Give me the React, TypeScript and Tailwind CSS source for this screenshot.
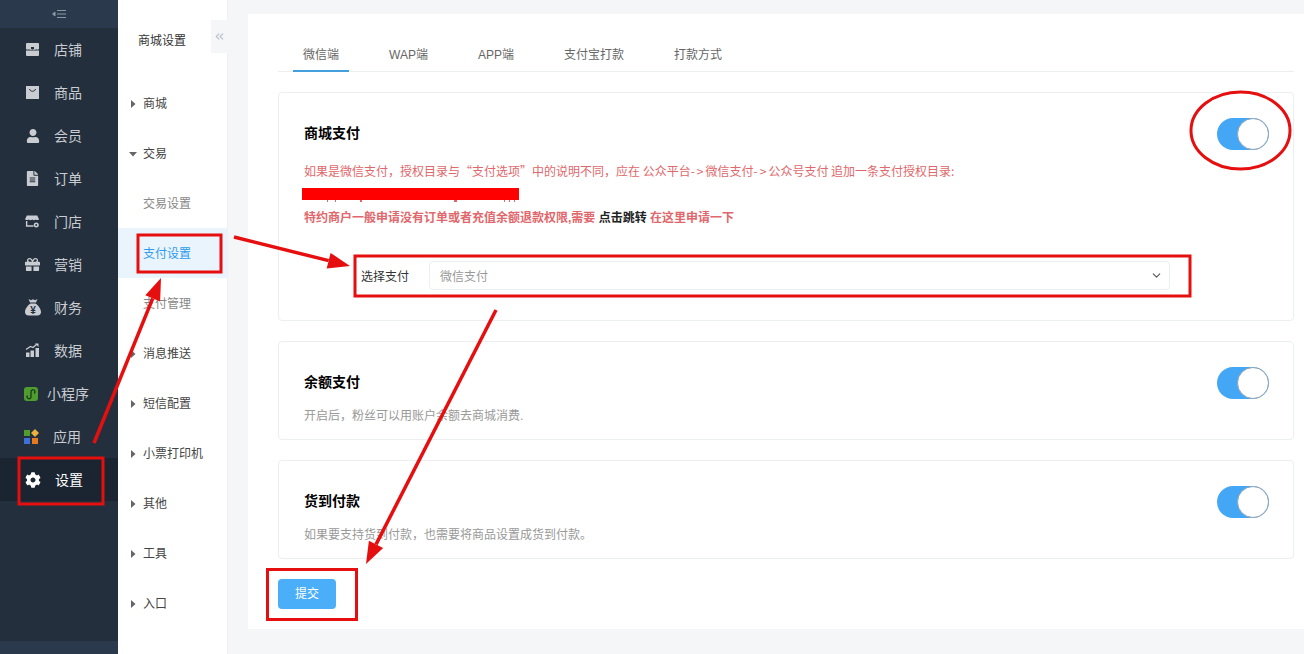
import { FaCog, FaFileAlt, FaGift, FaUser } from "react-icons/fa"
import { ChevronDown, ChevronsLeft } from "lucide-react"

const StoreIcon = () => (
  <svg viewBox="0 0 15 15" className="size-[15px]" fill="currentColor">
    <path d="M2 1h11a1 1 0 0 1 1 1v11a1 1 0 0 1-1 1H2a1 1 0 0 1-1-1V2a1 1 0 0 1 1-1z" />
    <path d="M1 7c1 .8 2 .8 3 .2 1 .8 2.400.8 3.500 0 1.100.8 2.500.8 3.500 0 1 .6 2 .6 3-.2v1.500H1z" fill="#232f3d" />
    <path d="M6 5h3v2H6z" fill="#232f3d" />
  </svg>
)

const BagIcon = () => (
  <svg viewBox="0 0 15 15" className="size-[15px]" fill="currentColor">
    <path d="M1 1h13v13H1z" />
    <path d="M4.500 4c.5 3 5.500 3 6 0" fill="none" stroke="#232f3d" strokeWidth="1" />
  </svg>
)

const ShopIcon = () => (
  <svg viewBox="0 0 16 15" className="size-[15px]" fill="currentColor">
    <path d="M2 1h11l2 4c-1 1.300-2.600 1.300-3.500.3-1 1-2.800 1-3.800 0-1 1-2.700 1-3.700 0C3.100 6.300 1.300 6.300 0 5z" />
    <path d="M1 7h1.500v4.500H9V13H1zM12 8.500a2.700 2.700 0 1 1 0 5.400 2.700 2.700 0 0 1 0-5.400zm0 1.700a1 1 0 1 0 0 2 1 1 0 0 0 0-2z" />
  </svg>
)

const MoneyIcon = () => (
  <svg viewBox="0 0 16 17" className="w-4 h-[17px] shrink-0" fill="currentColor">
    <path d="M3.500 0l2.500 1.200L8 .2l2 1L12.500 0 11 3.500H5zM5.500 4.500h5C13.500 6.500 16 10 16 13c0 3-2.500 3.500-5 3.500H5C2.500 16.500 0 16 0 13 0 10 2.500 6.500 5.500 4.500z" />
    <text x="8" y="14.500" textAnchor="middle" fontSize="10" fontWeight="700" fill="#232f3d" fontFamily="Liberation Sans">¥</text>
  </svg>
)

const ChartIcon = () => (
  <svg viewBox="0 0 15 15" className="size-[15px]" fill="currentColor">
    <path d="M1 9.500h3.500V14H1zM5.500 7.500H9V14H5.500zM10.500 5H14v9h-3.500z" />
    <path d="M1 6.500 5.500 3.500l2.500 1L12 1" fill="none" stroke="currentColor" strokeWidth="1.300" />
    <path d="M10 .5h3.500V4z" />
  </svg>
)

const MiniIcon = () => (
  <svg viewBox="0 0 14 14" className="size-[14px]">
    <rect width="14" height="14" rx="3" fill="#4f9d2f" />
    <path d="M3.500 8.500a2 2 0 1 0 3.500 1V5a2 2 0 1 1 3 1.500" fill="none" stroke="#17301a" strokeWidth="1.200" />
  </svg>
)

const AppsIcon = () => (
  <svg viewBox="0 0 15 15" className="size-[15px]">
    <rect x="0" y="1" width="6" height="6" fill="#4f9d2f" />
    <path d="M11 0l4 4-4 4-4-4z" fill="#e8b23c" />
    <rect x="0" y="9" width="6" height="6" fill="#3f6fd8" />
    <rect x="8" y="9" width="6" height="6" fill="#e57a1f" />
  </svg>
)

const mainNav = [
  { name: "店铺", icon: <StoreIcon /> },
  { name: "商品", icon: <BagIcon /> },
  { name: "会员", icon: <FaUser size={14} /> },
  { name: "订单", icon: <FaFileAlt size={15} /> },
  { name: "门店", icon: <ShopIcon /> },
  { name: "营销", icon: <FaGift size={15} /> },
  { name: "财务", icon: <MoneyIcon /> },
  { name: "数据", icon: <ChartIcon /> },
]

const subNav = ["消息推送", "短信配置", "小票打印机", "其他", "工具", "入口"]
const tabs = ["微信端", "WAP端", "APP端", "支付宝打款", "打款方式"]

function Toggle() {
  return (
    <div className="flex justify-end w-[52px] h-8 rounded-full bg-[#44a7f5]">
      <div className="size-8 rounded-full bg-white border border-[#8fa3b5]" />
    </div>
  )
}

function Caret({ open }: { open?: boolean }) {
  return (
    <svg viewBox="0 0 8 8" className="size-2 text-[#666]" fill="currentColor">
      {open ? <path d="M0 2h8L4 6.500z" /> : <path d="M2 0l4.500 4L2 8z" />}
    </svg>
  )
}

function Arrow({ x1, y1, x2, y2 }: { x1: number; y1: number; x2: number; y2: number }) {
  const angle = Math.atan2(y2 - y1, x2 - x1)
  const len = 22
  const half = 8
  const bx = x2 - len * Math.cos(angle)
  const by = y2 - len * Math.sin(angle)
  const px = -Math.sin(angle) * half
  const py = Math.cos(angle) * half
  return (
    <g>
      <line x1={x1} y1={y1} x2={bx} y2={by} stroke="#e60f0f" strokeWidth="3.500" />
      <polygon points={`${x2},${y2} ${bx + px},${by + py} ${bx - px},${by - py}`} fill="#e60f0f" />
    </g>
  )
}

function Annotations() {
  return (
    <svg className="absolute left-0 top-0 pointer-events-none" width="1304" height="654" fill="none">
      <rect x="19" y="458" width="84" height="46" stroke="#e60f0f" strokeWidth="3" />
      <rect x="138" y="235" width="83" height="37" stroke="#e60f0f" strokeWidth="3" />
      <rect x="355" y="256" width="835" height="40" stroke="#e60f0f" strokeWidth="3" />
      <rect x="267.500" y="569.500" width="89" height="50" stroke="#e60f0f" strokeWidth="3" />
      <ellipse cx="1240.500" cy="130.500" rx="49.500" ry="38.500" stroke="#e60f0f" strokeWidth="3" />
      <Arrow x1={94} y1={443} x2={161} y2={278} />
      <Arrow x1={234} y1={237} x2={350} y2={266} />
      <Arrow x1={496} y1={310} x2={366} y2={564} />
    </svg>
  )
}

export default function App() {
  return (
    <div className="relative flex w-[1304px] h-[654px] overflow-hidden bg-[#f4f6f8] font-['Liberation_Sans','Noto_Sans_CJK_SC',sans-serif] text-xs">
      {/* Main nav */}
      <aside className="flex flex-col w-[118px] shrink-0 bg-[#232f3d] text-[#c9ccd0] text-sm">
        <div className="flex items-center justify-center h-7 bg-[#2a3a4c] text-[#8b97a5]">
          <svg viewBox="0 0 14 8" className="w-3.5 h-2" stroke="currentColor" fill="none" strokeWidth="1">
            <path d="M5 .5h9M5 4h9M5 7.500h9" />
            <path d="M3 2 .5 4 3 6z" fill="currentColor" />
          </svg>
        </div>
        {mainNav.map((item) => (
          <div key={item.name} className="flex items-center gap-3.5 h-[43px] pl-[25px]">
            <span className="flex w-[15px] justify-center">{item.icon}</span>
            <span>{item.name}</span>
          </div>
        ))}
        <div className="flex items-center gap-[9px] h-[43px] pl-6">
          <MiniIcon />
          <span>小程序</span>
        </div>
        <div className="flex items-center gap-3.5 h-[43px] pl-6">
          <AppsIcon />
          <span>应用</span>
        </div>
        <div className="flex items-center gap-3.5 h-[43px] pl-[25px] bg-[#1b2431] text-white">
          <FaCog size={16} />
          <span>设置</span>
        </div>
        <div className="mt-auto h-[13px] bg-[#2a3a4c]" />
      </aside>

      {/* Sub nav */}
      <nav className="relative flex flex-col w-[110px] shrink-0 bg-white border-r border-[#eef0f3] text-[#444]">
        <div className="h-[78px] pt-[34px] pl-5 leading-[14px] text-[#333]">商城设置</div>
        <div className="absolute -right-px top-5 flex items-center justify-center w-[17px] h-[33px] bg-[#f4f6f8] text-[#b9c0c9]">
          <ChevronsLeft size={13} />
        </div>
        <div className="flex items-center h-[50px] pt-[2px] pl-[11px] gap-1.5">
          <Caret />
          <span>商城</span>
        </div>
        <div className="flex items-center h-[50px] pt-[2px] pl-[11px] gap-1.5">
          <Caret open />
          <span>交易</span>
        </div>
        <div className="flex items-center h-[50px] pt-[2px] pl-[25px] text-[#888]">交易设置</div>
        <div className="flex items-center h-[50px] pt-[2px] pl-[25px] bg-[#eaf4fd] text-[#2d9bf0]">支付设置</div>
        <div className="flex items-center h-[50px] pt-[2px] pl-[25px] text-[#888]">支付管理</div>
        {subNav.map((name) => (
          <div key={name} className="flex items-center h-[50px] pt-[2px] pl-[11px] gap-1.5">
            <Caret />
            <span>{name}</span>
          </div>
        ))}
      </nav>

      {/* Content */}
      <main className="flex-1 pt-3.5 pl-5">
        <div className="h-[615px] bg-white pl-[30px] pr-2.5">
          <div className="flex gap-[30px] h-[58px] pt-[22px] pl-[15px] border-b border-[#eceef1] text-[#666]">
            {tabs.map((tab, i) => (
              <div
                key={tab}
                className={`h-9 px-2.5 leading-[38px] ${i === 0 ? "border-b-2 border-[#44a0dc]" : ""}`}
              >
                {tab}
              </div>
            ))}
          </div>

          <section className="mt-5 h-[229px] rounded-sm border border-[#eceef1] relative pl-[25px] pt-[30px]">
            <h3 className="text-sm font-bold leading-[20px] text-black">商城支付</h3>
            <div className="absolute right-6 top-[25px]">
              <Toggle />
            </div>
            <p className="mt-[18px] leading-[20px] text-[#e0676b] font-['Noto_Sans_CJK_SC',sans-serif]">
              如果是微信支付，授权目录与“支付选项”中的说明不同，应在 公众平台
              <span className="tracking-[2px]">-&gt;</span>微信支付<span className="tracking-[2px]">-&gt;</span>
              公众号支付 追加一条支付授权目录:
            </p>
            <div className="relative mt-1 h-[20px]">
              {/* descenders of the hidden line, sticking out below the red bar */}
              <svg className="absolute -left-0.5 top-[3px]" width="217" height="15" fill="#e0676b">
                <path d="M25 12h1v2h-1zM33 12h1v2h-1zM58 12h2v2h-2zM152 12h3v2h-3zM202 12h1v2h-1zM207 12h1v2h-1zM212 12h1v2h-1z" />
              </svg>
              <div className="absolute -left-0.5 top-[3px] w-[217px] h-3 bg-[#ff0000]" />
            </div>
            <p className="mt-[3px] leading-[20px] font-semibold text-[#e0676b]">
              特约商户一般申请没有订单或者充值余额退款权限,需要 <span className="text-[#222]">点击跳转</span> 在这里申请一下
            </p>
            <div className="flex items-center mt-[33px] ml-[57px]">
              <label className="w-[68px] pt-[2px] text-[#333]">选择支付</label>
              <div className="flex items-center justify-between w-[741px] h-[29px] pl-2.5 pr-1.5 rounded-sm border border-[#eceef1] text-[#999]">
                <span className="pt-[2px]">微信支付</span>
                <ChevronDown size={13} className="text-[#555]" />
              </div>
            </div>
          </section>

          <section className="relative mt-5 h-[99px] rounded-sm border border-[#eceef1] pl-[25px] pt-[30px]">
            <h3 className="text-sm font-bold leading-[20px] text-black">余额支付</h3>
            <div className="absolute right-6 top-[25px]">
              <Toggle />
            </div>
            <p className="mt-[14px] leading-[20px] text-[#999]">开启后，粉丝可以用账户余额去商城消费.</p>
          </section>

          <section className="relative mt-5 h-[99px] rounded-sm border border-[#eceef1] pl-[25px] pt-[30px]">
            <h3 className="text-sm font-bold leading-[20px] text-black">货到付款</h3>
            <div className="absolute right-6 top-[25px]">
              <Toggle />
            </div>
            <p className="mt-[14px] leading-[20px] text-[#999]">如果要支持货到付款，也需要将商品设置成货到付款。</p>
          </section>

          <button className="mt-5 w-[58px] h-[30px] rounded-sm bg-[#4aaef8] text-white">提交</button>
        </div>
      </main>

      <Annotations />
    </div>
  )
}
